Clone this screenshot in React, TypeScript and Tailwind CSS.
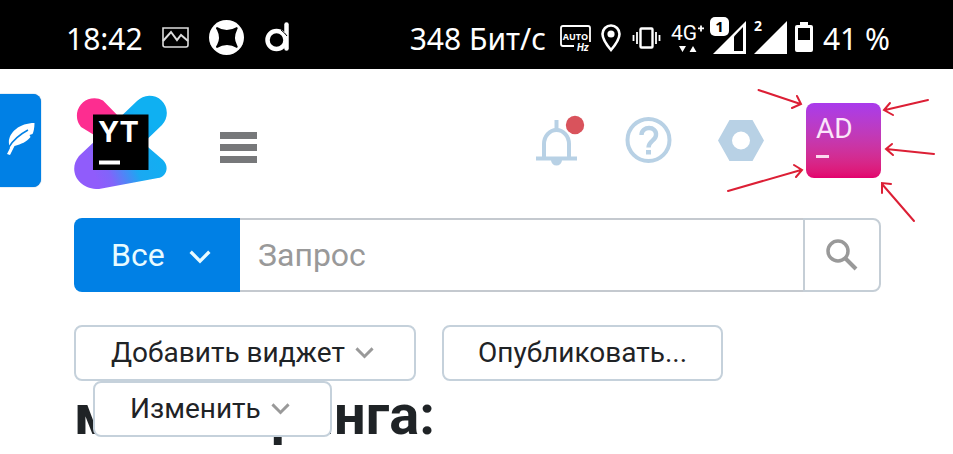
import React from "react";

const label = "font-['Roboto','Noto_Sans',sans-serif]";
const status = "font-['Noto_Sans','Open_Sans',sans-serif]";

function Chevron({ className }: { className: string }) {
  return (
    <svg viewBox="0 0 20 14" fill="none" stroke="currentColor" strokeWidth="3" className={className} aria-hidden="true">
      <path d="M1.5 2.5 10 11 18.5 2.5" />
    </svg>
  );
}

function StatusBar() {
  return (
    <div className={`flex h-[69px] items-center bg-black pt-2 pr-[63px] pl-[66px] text-[30px] leading-9 whitespace-nowrap text-white ${status}`}>
      <span className="w-24 shrink-0">18:42</span>
      <svg width="27" height="22" viewBox="0 0 27 22" fill="none" stroke="#ddd" strokeWidth="1.6" className="-mt-0.5 shrink-0">
        <path d="M1 1h25v17q0 2-2 2H3q-2 0-2-2z" />
        <path d="m1 14 8-9 6 8 4-5 7 6" strokeWidth="2" />
      </svg>
      <svg width="35" height="35" viewBox="0 0 35 35" className="-mt-0.5 ml-5 shrink-0">
        <circle cx="17.500" cy="17.500" r="17.500" fill="#fff" />
        <path d="M8 7q9.500 6 20 0 1.500 1 0 3-4 8 0 15 1.500 2 0 3-10-6-20 0-2-1 0-3 4-7 0-15-2-2 0-3z" fill="#000" />
      </svg>
      <svg width="25" height="31" viewBox="0 0 25 31" fill="none" stroke="#fff" className="-mt-1 ml-[21px] shrink-0">
        <circle cx="11.500" cy="19" r="9" strokeWidth="4.500" />
        <path d="M21.500 3.500v24" strokeWidth="4.500" strokeLinecap="round" />
        <path d="M16 9q4 3 6 6" stroke="#000" strokeWidth="1" />
      </svg>

      <span className="ml-auto shrink-0">348 Бит/с</span>
      <svg width="31" height="27" viewBox="0 0 31 27" className="ml-3.5 shrink-0">
        <path d="M14 21H3q-2 0-2-2V3q0-2 2-2h25q2 0 2 2v14" fill="none" stroke="#fff" strokeWidth="1.800" />
        <text x="15.500" y="14.500" textAnchor="middle" fontSize="9" fontWeight="700" fill="#fff" fontFamily="Open Sans">AUTO</text>
        <text x="17" y="26" fontSize="10" fontWeight="700" fontStyle="italic" fill="#fff" fontFamily="Roboto">Hz</text>
      </svg>
      <svg width="20" height="29" viewBox="0 0 20 29" className="ml-2.5 shrink-0">
        <path d="M10 1.500a8.500 8.500 0 0 0-8.500 8.500C1.500 16 10 26 10 26s8.500-10 8.500-16A8.500 8.500 0 0 0 10 1.500z" fill="none" stroke="#fff" strokeWidth="2.600" />
        <circle cx="10" cy="10" r="3.600" fill="#fff" />
      </svg>
      <svg width="29" height="22" viewBox="0 0 29 22" fill="none" stroke="#fff" className="-mt-0.5 ml-[11px] shrink-0">
        <rect x="8.500" y="1.500" width="12" height="19" rx="1" strokeWidth="2.400" />
        <path d="M5 5v12M24 5v12M1.500 8v6M27.500 8v6" strokeWidth="1.800" />
      </svg>
      <svg width="36" height="31" viewBox="0 0 36 31" fill="#fff" className="-mt-0.5 ml-[9px] shrink-0" fontFamily="Roboto">
        <text x="1" y="18" fontSize="21">4G</text>
        <path d="M28 5.500h6v1.800h-6zM30.100 3.400h1.800v6h-1.800z" />
        <path d="M9 24h7l-3.500 6zM19.500 30h7L23 24z" />
      </svg>
      <svg width="37" height="38" viewBox="0 0 37 38" className="-mt-2 ml-1 shrink-0">
        <path d="M3 38 36 5v33z" fill="#fff" />
        <path d="M24 20.500 33 11v24h-9z" fill="#000" />
        <rect x="0" y="1" width="19" height="19" rx="5" fill="#fff" />
        <text x="9.500" y="16" textAnchor="middle" fontSize="15" fontWeight="700" fontFamily="Noto Sans">1</text>
      </svg>
      <svg width="34" height="38" viewBox="0 0 34 38" fill="#fff" className="-mt-2 ml-1.5 shrink-0">
        <path d="M1 38 34 5v33z" />
        <text x="1" y="15" fontSize="14" fontWeight="700" fontFamily="Noto Sans">2</text>
      </svg>
      <svg width="18" height="30" viewBox="0 0 18 30" className="-mt-1 ml-2 shrink-0">
        <path d="M5 0h8v3h3q2 0 2 2v23q0 2-2 2H2q-2 0-2-2V5q0-2 2-2h3z" fill="#fff" />
        <path d="M3 6h12v12H3z" fill="#000" />
      </svg>
      <span className="ml-2.5 shrink-0">41 %</span>
    </div>
  );
}

function Logo() {
  return (
    <svg width="93" height="94" viewBox="0 0 93 94" className="mt-[3px] ml-[33px] shrink-0" role="img" aria-label="YouTrack">
      <defs>
        <linearGradient id="violet" x1="0" y1="0.600" x2="1" y2="0.300">
          <stop offset="0.150" stopColor="#905cfb" />
          <stop offset="0.300" stopColor="#8164fa" />
          <stop offset="0.600" stopColor="#1aa9f2" />
          <stop offset="1" stopColor="#0fb0f2" />
        </linearGradient>
        <linearGradient id="sky" x1="0" y1="1" x2="1" y2="0">
          <stop offset="0" stopColor="#188ff3" />
          <stop offset="0.600" stopColor="#0fb0f2" />
          <stop offset="1" stopColor="#0fb0f2" />
        </linearGradient>
      </defs>
      <path d="M7 32A17.500 17.500 0 0 1 29 5.500L50 27 30 46z" fill="#fd2d90" />
      <path d="M40 28 63 6a17.300 17.300 0 0 1 25 24L60 57z" fill="url(#sky)" />
      <path d="M5 61 40 28 60 40 89 65c7 7 3 17-5 18L25 94C5 95-7 76 5 61z" fill="url(#violet)" />
      <path d="M19 19.500h55.500V75H19z" fill="#000" />
      <text x="24" y="47" fontSize="29" fontWeight="700" fill="#fff" fontFamily="Inter">YT</text>
      <path d="M25 65.500h21v4H25z" fill="#fff" />
    </svg>
  );
}

function Arrows() {
  return (
    <svg width="233" height="155" viewBox="0 0 233 155" fill="none" stroke="#dc1f35" strokeWidth="2" strokeLinecap="round" className="pointer-events-none absolute -top-7 -right-[72px] max-w-none" aria-hidden="true">
      <path d="m38.500 15 42 14M77 21l4 8-9 4" />
      <path d="m208 25-43 10M170 28l-6 7 9 5" />
      <path d="m214 79-48-5M172 69l-6 5 7 6" />
      <path d="m8 116 73-21M74 90l8 5-6 7" />
      <path d="m194 146-32-37M162 118v-10l9 1" />
    </svg>
  );
}

function Header() {
  return (
    <header className="flex items-center pt-[23px] pr-[72px]">
      <button aria-label="Написать" className="flex h-[93px] w-[41px] shrink-0 items-center justify-end rounded-r-lg bg-[#0080e5] pr-1.5 pb-1 shadow-[0_0_1px_#0060b0]">
        <svg width="29" height="34" viewBox="0 0 29 34" aria-hidden="true">
          <path d="M1 32 4 26C-1 14 11 1 28.500 1c0 5-1 9-2 11l-3 1 1 2c-4 5-9 7-16 9L4 33z" fill="#fff" />
          <path d="M3 25Q9 15 22 8" stroke="#0080e5" strokeWidth="1.500" fill="none" />
        </svg>
      </button>
      <Logo />
      <button aria-label="Меню" className="mt-3.5 ml-[53px] flex w-[37px] flex-col gap-[5px]">
        <span className="h-[7px] bg-[#77787a]" />
        <span className="h-[7px] bg-[#77787a]" />
        <span className="h-[7px] bg-[#77787a]" />
      </button>
      <div className="ml-auto flex items-center">
        <button aria-label="Уведомления">
          <svg width="49" height="52" viewBox="0 0 49 52" fill="none" stroke="#b8d1e5" aria-hidden="true">
            <path d="M20.500 5v10" strokeWidth="4" />
            <path d="M8 43V29a12.500 14 0 0 1 25 0v14" strokeWidth="4" />
            <path d="M0 43.500h41" strokeWidth="4" />
            <path d="M15 45h11a5.500 5.500 0 0 1-11 0z" fill="#b8d1e5" stroke="none" />
            <circle cx="39" cy="10" r="9.200" fill="#d9535c" stroke="none" />
          </svg>
        </button>
        <button aria-label="Справка" className="ml-10">
          <svg width="47" height="47" viewBox="0 0 47 47" fill="none" stroke="#b8d1e5" aria-hidden="true">
            <circle cx="23.500" cy="23" r="21" strokeWidth="4" />
            <path d="M16.500 18c0-9.500 15.500-9 14.500 0 0 5.500-7.500 6-7.500 12.500" strokeWidth="4.400" />
            <path d="M21 33h5v4.500h-5z" fill="#b8d1e5" stroke="none" />
          </svg>
        </button>
        <button aria-label="Настройки" className="ml-[46px]">
          <svg width="46" height="41" viewBox="0 0 46 41" aria-hidden="true">
            <path fillRule="evenodd" d="M11.500 0h23L46 20.500 34.500 41h-23L0 20.500zM23 11.500a9 9 0 1 0 0 18 9 9 0 0 0 0-18z" fill="#b8d1e5" />
          </svg>
        </button>
        <div className="relative ml-[42px]">
          <button aria-label="Профиль AD" className={`flex h-[75px] w-[75px] flex-col items-start rounded-lg bg-linear-to-b from-[#a93aec] to-[#e3006d] px-2.5 pt-2.5 text-[28px] leading-8 text-[#fbe6fa] ${label}`}>
            AD
            <span className="mt-2.5 h-[3px] w-[13px] bg-[#fbd9ef]" />
          </button>
          <Arrows />
        </div>
      </div>
    </header>
  );
}

function SearchBar() {
  return (
    <form className="flex h-[74px] text-[32px]" onSubmit={(e) => e.preventDefault()}>
      <div className="relative w-[166px] shrink-0 text-[#e8fbff]">
        <select aria-label="Контекст поиска" className="h-full w-full appearance-none rounded-l-lg bg-[#0080e5] pl-[37px]">
          <option>Все</option>
        </select>
        <Chevron className="pointer-events-none absolute top-[31px] right-[29px] w-[22px]" />
      </div>
      <input aria-label="Запрос" placeholder="Запрос" className="min-w-0 flex-1 border-y-2 border-[#c4c9cf] px-[18px] outline-none placeholder:text-[#999]" />
      <button aria-label="Найти" className="flex w-[78px] shrink-0 items-center justify-center rounded-r-lg border-2 border-[#c5ced6]">
        <svg width="32" height="32" viewBox="0 0 32 32" fill="none" stroke="#999" aria-hidden="true">
          <circle cx="12" cy="12" r="10" strokeWidth="3.500" />
          <path d="m19 19 11 11" strokeWidth="4" />
        </svg>
      </button>
    </form>
  );
}

function ToolButton({ children, menu = false }: { children: React.ReactNode; menu?: boolean }) {
  return (
    <button className={`flex h-14 items-center rounded-lg border-2 border-[#c5d1db] bg-white text-[28px] whitespace-nowrap text-[#1f2326] ${menu ? "pr-10 pl-[35px]" : "px-[34px]"}`}>
      {children}
      {menu && <Chevron className="ml-2.5 w-[19px] text-[#999]" />}
    </button>
  );
}

export default function App() {
  return (
    <div className={`min-h-screen overflow-hidden bg-white ${label}`}>
      <StatusBar />
      <Header />
      <main className="pt-[29px] pr-[72px] pl-[74px]">
        <SearchBar />
        <div className="relative z-10 mt-[33px]">
          <div className="flex gap-[26px]">
            <ToolButton menu>Добавить виджет</ToolButton>
            <ToolButton>Опубликовать...</ToolButton>
          </div>
          <div className="flex pl-[19px]">
            <ToolButton menu>Изменить</ToolButton>
          </div>
        </div>
        <h1 className="-mt-[54px] text-[56px] leading-[64px] font-bold text-[#1f2326]">мониторинга:</h1>
      </main>
    </div>
  );
}
